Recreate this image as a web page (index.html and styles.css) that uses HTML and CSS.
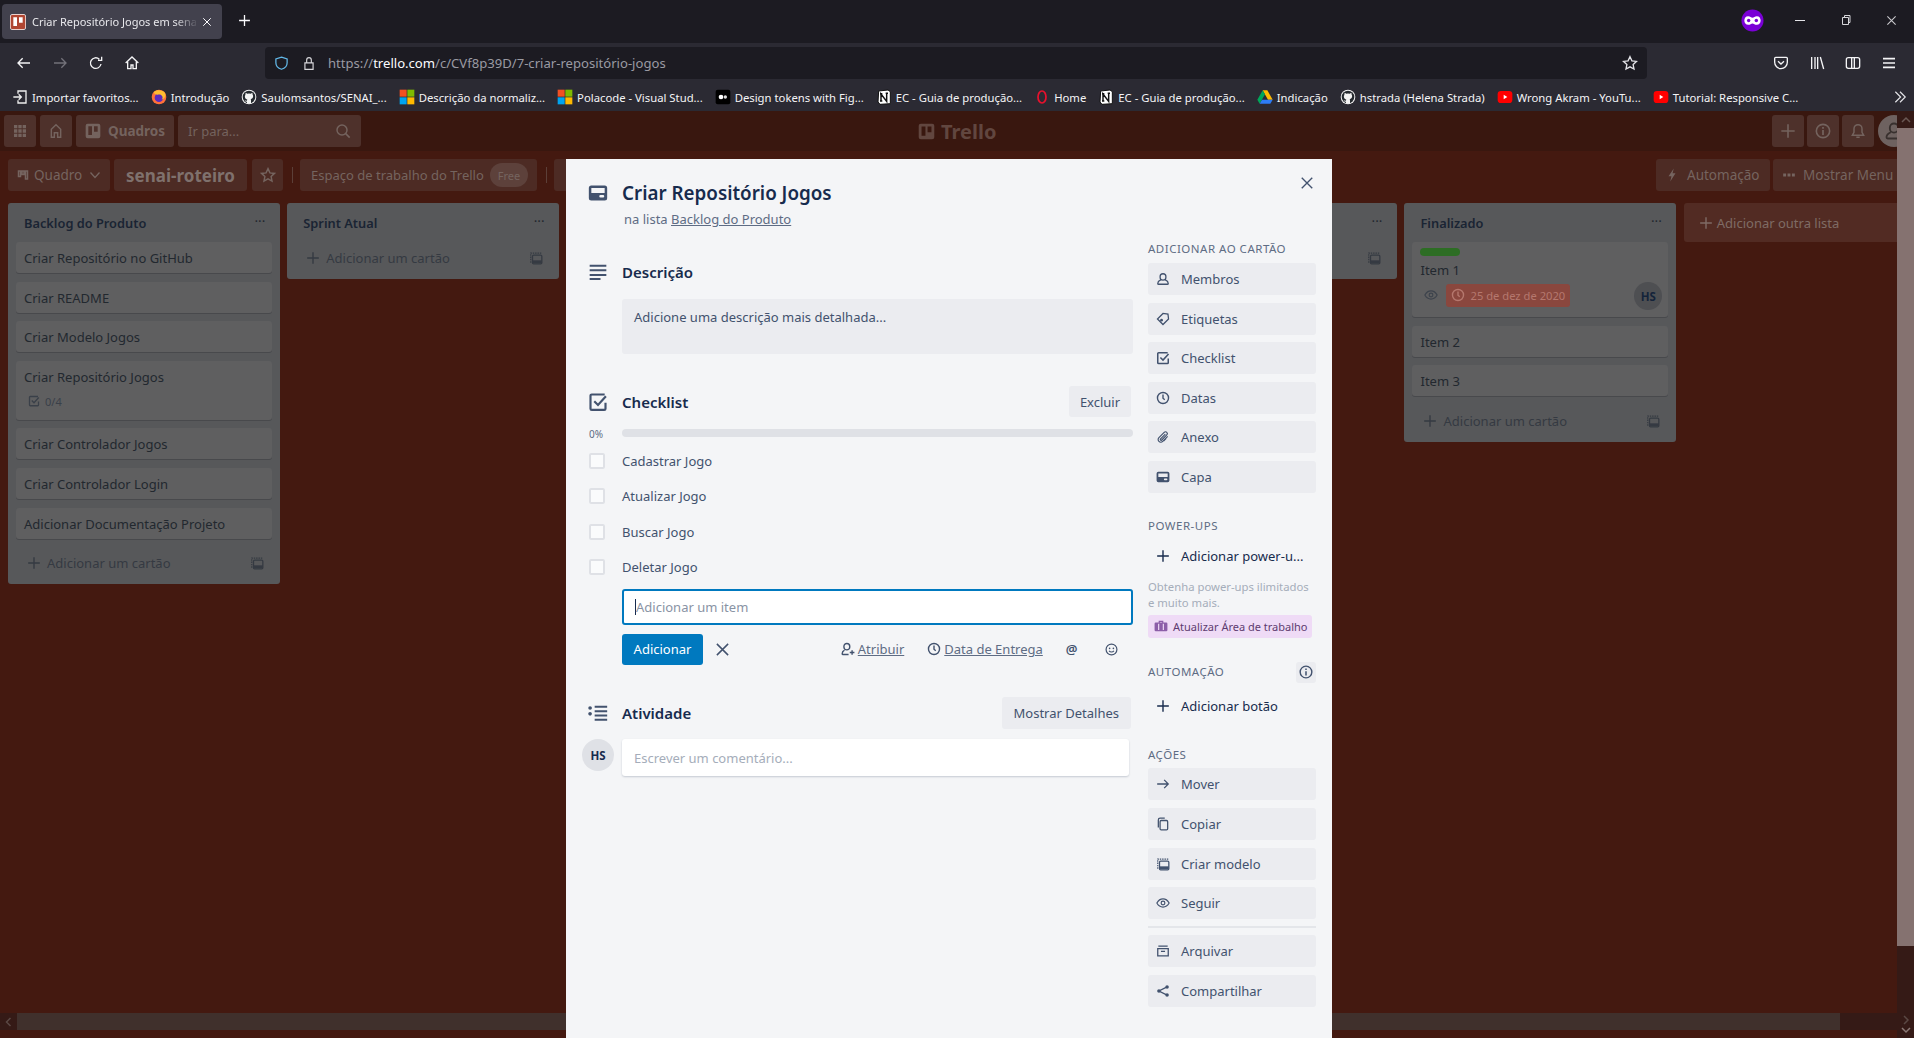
FILE: index.html
```html
<!DOCTYPE html>
<html lang="pt-BR">
<head>
    <meta charset="utf-8">
    <title>Criar Repositório Jogos em senai-roteiro | Trello</title>
    <link rel="stylesheet" href="styles.css">
</head>
<body>
    <svg class="sprite" xmlns="http://www.w3.org/2000/svg">
        <symbol id="i-card" viewBox="0 0 24 24"><path fill="currentColor" fill-rule="evenodd" d="M4 3h16a3 3 0 0 1 3 3v12a3 3 0 0 1-3 3H4a3 3 0 0 1-3-3V6a3 3 0 0 1 3-3zm0 3v6h16V6H4zm11 8.500a1.500 1.500 0 0 0 0 3h3a1.500 1.500 0 0 0 0-3h-3z"/></symbol>
        <symbol id="i-desc" viewBox="0 0 24 24"><path fill="none" stroke="currentColor" stroke-width="2.400" d="M2 4.500h20M2 10h20M2 15.500h20M2 20.500h13"/></symbol>
        <symbol id="i-check" viewBox="0 0 24 24"><path fill="none" stroke="currentColor" stroke-width="2.600" d="M21 13v7a1.500 1.500 0 0 1-1.500 1.500h-15A1.500 1.500 0 0 1 3 20V4.500A1.500 1.500 0 0 1 4.500 3H20M7.500 11l4.500 4.500L21.500 5"/></symbol>
        <symbol id="i-activity" viewBox="0 0 24 24"><circle cx="2.500" cy="6" r="2.200" fill="currentColor"/><circle cx="2.500" cy="13" r="2.200" fill="currentColor"/><path fill="none" stroke="currentColor" stroke-width="2.400" d="M8 4.500h15M8 10h15M8 15h15M8 20h15"/></symbol>
        <symbol id="i-member" viewBox="0 0 24 24"><path fill="none" stroke="currentColor" stroke-width="2.200" d="M12 3a5 5 0 0 1 5 5v1a5 5 0 0 1-10 0V8a5 5 0 0 1 5-5zM8 13.500C5 15 3 17 3 19.500c0 1 .6 1.500 1.500 1.500h15c.9 0 1.500-.5 1.500-1.500 0-2.500-2-4.500-5-6"/></symbol>
        <symbol id="i-tag" viewBox="0 0 24 24"><path fill="none" stroke="currentColor" stroke-width="2.200" d="M12 2.500l9.500 9.500L12 21.500 2.500 12 3.500 3.500z" transform="rotate(90 12 12)"/><circle cx="9.500" cy="14" r="2.400" fill="currentColor"/></symbol>
        <symbol id="i-clock" viewBox="0 0 24 24"><circle cx="12" cy="12" r="9.500" fill="none" stroke="currentColor" stroke-width="2.400"/><path fill="none" stroke="currentColor" stroke-width="2.400" d="M12 6v6.500l3 2.500"/></symbol>
        <symbol id="i-clip" viewBox="0 0 24 24"><path fill="none" stroke="currentColor" stroke-width="2" d="M20 11l-8.500 8.500a4.500 4.500 0 0 1-6.500-6.500L14 4a3 3 0 0 1 4.500 4.500L9.500 17.500a1.500 1.500 0 0 1-2-2L16 7M17.500 14.500l-4.500 4.500"/></symbol>
        <symbol id="i-plus" viewBox="0 0 24 24"><path fill="none" stroke="currentColor" stroke-width="2.400" d="M12 2v20M2 12h20"/></symbol>
        <symbol id="i-arrow" viewBox="0 0 24 24"><path fill="none" stroke="currentColor" stroke-width="2.200" d="M2 12h19M14 5l7 7-7 7"/></symbol>
        <symbol id="i-copy" viewBox="0 0 24 24"><path fill="none" stroke="currentColor" stroke-width="2.200" d="M9 6h9a2 2 0 0 1 2 2v12a2 2 0 0 1-2 2H9a2 2 0 0 1-2-2V8a2 2 0 0 1 2-2zM4 18V5a3 3 0 0 1 3-3h8"/></symbol>
        <symbol id="i-template" viewBox="0 0 24 24"><path fill="none" stroke="currentColor" stroke-width="2" stroke-dasharray="2.500 1.500" d="M3 20V3.500h18"/><rect x="6" y="7" width="16" height="15" rx="2" fill="none" stroke="currentColor" stroke-width="2.200"/><path fill="currentColor" d="M6 16h16v5H6z"/></symbol>
        <symbol id="i-eye" viewBox="0 0 24 24"><path fill="none" stroke="currentColor" stroke-width="2" d="M1.500 12C4 7.500 8 5 12 5s8 2.500 10.500 7C20 16.500 16 19 12 19s-8-2.500-10.500-7z"/><circle cx="12" cy="12" r="3.200" fill="none" stroke="currentColor" stroke-width="2"/></symbol>
        <symbol id="i-archive" viewBox="0 0 24 24"><path fill="none" stroke="currentColor" stroke-width="2.200" d="M4 3.500h16M3 8h18v12.500H3zM8.500 12.500h7"/></symbol>
        <symbol id="i-share" viewBox="0 0 24 24"><circle cx="5" cy="12" r="3" fill="currentColor"/><circle cx="19" cy="5" r="3" fill="currentColor"/><circle cx="19" cy="19" r="3" fill="currentColor"/><path fill="none" stroke="currentColor" stroke-width="2.200" d="M19 5L5 12l14 7"/></symbol>
        <symbol id="i-info" viewBox="0 0 24 24"><circle cx="12" cy="12" r="10" fill="none" stroke="currentColor" stroke-width="2.400"/><path fill="none" stroke="currentColor" stroke-width="2.600" d="M12 10.500V18M12 6v2.500"/></symbol>
        <symbol id="i-x" viewBox="0 0 24 24"><path fill="none" stroke="currentColor" stroke-width="2.400" d="M3 3l18 18M21 3L3 21"/></symbol>
        <symbol id="i-board" viewBox="0 0 24 24"><path fill="currentColor" fill-rule="evenodd" d="M4 1h16a3 3 0 0 1 3 3v16a3 3 0 0 1-3 3H4a3 3 0 0 1-3-3V4a3 3 0 0 1 3-3zm1 4v13h5.500V5H5zm8.500 0v8H19V5h-5.500z"/></symbol>
        <symbol id="i-github" viewBox="0 0 24 24"><circle cx="12" cy="12" r="11" fill="#f4f4f4"/><circle cx="12" cy="12" r="9.500" fill="#24292e"/><path fill="#f4f4f4" d="M7 5.500l2.500 1.500a8 8 0 0 1 5 0L17 5.500l.5 3c1 1.500 1 4-.5 5.500-.7.7-1.500 1-2.500 1.200.4.500.5 1 .5 2V22h-6v-3c-2 .3-3-.5-3.500-2 .8.500 2 1 3.500.5 0-.7.100-1.300.5-1.800-1-.2-1.800-.5-2.500-1.200-1.500-1.500-1.500-4-.5-5.500z"/></symbol>
        <symbol id="i-ms" viewBox="0 0 24 24"><path fill="#f25022" d="M1 1h10.500v10.500H1z"/><path fill="#7fba00" d="M12.500 1H23v10.500H12.500z"/><path fill="#00a4ef" d="M1 12.500h10.500V23H1z"/><path fill="#ffb900" d="M12.500 12.500H23V23H12.500z"/></symbol>
        <symbol id="i-notion" viewBox="0 0 24 24"><path fill="#fff" stroke="#111" stroke-width="1.500" d="M4 3l14-1.500L21.500 4v18L6 23l-3-3.500z"/><path fill="none" stroke="#111" stroke-width="2.200" d="M7.500 18V7.500l8.500 11V6.500M6 7h3.500M14.500 6.500H18M6 18h3.500"/></symbol>
        <symbol id="i-yt" viewBox="0 0 24 24"><rect x="1" y="3" width="22" height="18" rx="5" fill="#f00"/><path fill="#fff" d="M10 8.500l5.500 3.500-5.500 3.500z"/></symbol>
    </svg>

    <div class="browser">
        <div class="tabstrip">
            <div class="tab">
                <svg class="favicon"><use href="#i-board"/></svg>
                <span class="tab-title">Criar Repositório Jogos em sena</span>
                <svg class="tab-close"><use href="#i-x"/></svg>
            </div>
            <svg class="new-tab"><use href="#i-plus"/></svg>
            <div class="win-controls">
                <svg class="mask" viewBox="0 0 24 24"><circle cx="12" cy="12" r="11.500" fill="#7a00d6"/><path fill="#fff" d="M7.500 7.500c2 0 3.200 1.500 4.500 1.500s2.500-1.500 4.500-1.500c2.800 0 4 2 4 4.500s-1.500 4.500-4 4.500c-2 0-3.200-1.500-4.500-1.500s-2.500 1.500-4.500 1.500c-2.500 0-4-2-4-4.500s1.200-4.500 4-4.500z"/><circle cx="8" cy="12" r="1.800" fill="#7a00d6"/><circle cx="16" cy="12" r="1.800" fill="#7a00d6"/></svg>
                <span class="win-min"></span>
                <svg class="win-restore" viewBox="0 0 12 12"><path fill="none" stroke="#d6d6da" d="M2.500 3.500h6v7h-6zM4.500 3.500v-2h5.500v7H8.500"/></svg>
                <svg class="win-close"><use href="#i-x"/></svg>
            </div>
        </div>

        <div class="navbar">
            <svg class="nav-ic" viewBox="0 0 24 24"><path fill="none" stroke="currentColor" stroke-width="2" d="M21 12H3M10 5l-7 7 7 7"/></svg>
            <svg class="nav-ic off" viewBox="0 0 24 24"><path fill="none" stroke="currentColor" stroke-width="2" d="M3 12h18M14 5l7 7-7 7"/></svg>
            <svg class="nav-ic" viewBox="0 0 24 24"><path fill="none" stroke="currentColor" stroke-width="2" d="M19.500 13.500A8 8 0 1 1 17 6.200M20.500 2.500V8H15"/></svg>
            <svg class="nav-ic home" viewBox="0 0 24 24"><path fill="none" stroke="currentColor" stroke-width="2" d="M2.500 12L12 3l9.500 9M5.500 10v10.500h5V15h3v5.500h5V10"/></svg>
            <div class="urlbar">
                <svg class="shield" viewBox="0 0 24 24"><path fill="none" stroke="#62b8e8" stroke-width="2" d="M12 2.500l9 3v6c0 5-4 9-9 10.500-5-1.500-9-5.500-9-10.500v-6z"/></svg>
                <svg class="lock" viewBox="0 0 24 24"><path fill="none" stroke="#d6d6da" stroke-width="2" d="M5 11h14v11H5zM8 11V6a4 4 0 0 1 8 0v5"/></svg>
                <span class="url">https://<b>trello.com</b>/c/CVf8p39D/7-criar-repositório-jogos</span>
                <svg class="url-star" viewBox="0 0 24 24"><path fill="none" stroke="#e4e4e8" stroke-width="2" d="M12 2.500l2.900 6.300 6.800.8-5 4.700 1.300 6.800-6-3.400-6 3.400 1.300-6.800-5-4.700 6.800-.8z"/></svg>
            </div>
            <div class="nav-right">
                <svg class="nav-ic" viewBox="0 0 24 24"><path fill="none" stroke="currentColor" stroke-width="2" d="M4 3.500h16a1.500 1.500 0 0 1 1.500 1.500v6a9.500 9.500 0 0 1-19 0V5A1.500 1.500 0 0 1 4 3.500zM7.500 9.500l4.500 4 4.500-4"/></svg>
                <svg class="nav-ic" viewBox="0 0 24 24"><path fill="none" stroke="currentColor" stroke-width="2" d="M4 3v18M9 3v18M13 3v18M17 3l5 18"/></svg>
                <svg class="nav-ic" viewBox="0 0 24 24"><path fill="none" stroke="currentColor" stroke-width="2" d="M5 4h14a3 3 0 0 1 3 3v10a3 3 0 0 1-3 3H5a3 3 0 0 1-3-3V7a3 3 0 0 1 3-3zM10 4v16M14 4v16"/></svg>
                <svg class="nav-ic" viewBox="0 0 24 24"><path fill="none" stroke="currentColor" stroke-width="2.400" d="M3 5.500h18M3 12h18M3 18.500h18"/></svg>
            </div>
        </div>

        <div class="bookmarks">
            <div class="bm"><svg class="bm-ic" viewBox="0 0 24 24"><path fill="none" stroke="#eee" stroke-width="2" d="M9 7V3h12v18H9v-4M2 12h12M10 8l4 4-4 4"/></svg><span>Importar favoritos...</span></div>
            <div class="bm"><svg class="bm-ic" viewBox="0 0 24 24"><circle cx="12" cy="12" r="11" fill="#ff7139"/><circle cx="12" cy="13" r="6.500" fill="#5b2bbd"/><path fill="#ffbd30" d="M4 5c3 6 8 2 11 4s3 5 1 7c4-1 7-5 5-10-3-4-12-6-17-1z"/></svg><span>Introdução</span></div>
            <div class="bm"><svg class="bm-ic"><use href="#i-github"/></svg><span>Saulomsantos/SENAI_...</span></div>
            <div class="bm"><svg class="bm-ic"><use href="#i-ms"/></svg><span>Descrição da normaliz...</span></div>
            <div class="bm"><svg class="bm-ic"><use href="#i-ms"/></svg><span>Polacode - Visual Stud...</span></div>
            <div class="bm"><svg class="bm-ic" viewBox="0 0 24 24"><rect x="1" y="1" width="22" height="22" rx="3" fill="#000"/><circle cx="9" cy="12" r="3.500" fill="#fff"/><circle cx="15.500" cy="12" r="2.500" fill="#ddd"/></svg><span>Design tokens with Fig...</span></div>
            <div class="bm"><svg class="bm-ic"><use href="#i-notion"/></svg><span>EC - Guia de produção...</span></div>
            <div class="bm"><svg class="bm-ic" viewBox="0 0 24 24"><ellipse cx="12" cy="12" rx="6" ry="9" fill="none" stroke="#e8112d" stroke-width="2.600"/></svg><span>Home</span></div>
            <div class="bm"><svg class="bm-ic"><use href="#i-notion"/></svg><span>EC - Guia de produção...</span></div>
            <div class="bm"><svg class="bm-ic" viewBox="0 0 24 24"><path fill="#ffba00" d="M8.500 2h7l8 14h-7z"/><path fill="#00a65a" d="M8.500 2L.5 16l3.500 6 8-14z"/><path fill="#2d7cf6" d="M7.500 16H23.500l-3.500 6H4z"/></svg><span>Indicação</span></div>
            <div class="bm"><svg class="bm-ic"><use href="#i-github"/></svg><span>hstrada (Helena Strada)</span></div>
            <div class="bm"><svg class="bm-ic"><use href="#i-yt"/></svg><span>Wrong Akram - YouTu...</span></div>
            <div class="bm"><svg class="bm-ic"><use href="#i-yt"/></svg><span>Tutorial: Responsive C...</span></div>
            <svg class="bm-more" viewBox="0 0 24 24"><path fill="none" stroke="#e4e4e8" stroke-width="2" d="M4 3l9 9-9 9M12 3l9 9-9 9"/></svg>
        </div>
    </div>

    <div class="page">
        <header class="topbar">
            <div class="top-btn square">
                <svg class="ic16" viewBox="0 0 24 24"><path fill="currentColor" d="M3 3h5v5H3zM9.500 3h5v5h-5zM16 3h5v5h-5zM3 9.500h5v5H3zM9.500 9.500h5v5h-5zM16 9.500h5v5h-5zM3 16h5v5H3zM9.500 16h5v5h-5zM16 16h5v5h-5z"/></svg>
            </div>
            <div class="top-btn square">
                <svg class="ic16" viewBox="0 0 24 24"><path fill="none" stroke="currentColor" stroke-width="2.200" d="M12 2.500L5 9.500v12h4.500v-7h5v7H19v-12z"/></svg>
            </div>
            <div class="top-btn quadros">
                <svg class="ic16"><use href="#i-board"/></svg>
                <span>Quadros</span>
            </div>
            <div class="top-btn search">
                <span>Ir para...</span>
                <svg class="ic16" viewBox="0 0 24 24"><circle cx="10.500" cy="10.500" r="7.500" fill="none" stroke="currentColor" stroke-width="2.200"/><path fill="none" stroke="currentColor" stroke-width="2.400" d="M16 16l6 6"/></svg>
            </div>
            <div class="logo">
                <svg class="logo-ic"><use href="#i-board"/></svg>
                <span>Trello</span>
            </div>
            <div class="top-right">
                <div class="top-btn square"><svg class="ic16"><use href="#i-plus"/></svg></div>
                <div class="top-btn square"><svg class="ic16"><use href="#i-info"/></svg></div>
                <div class="top-btn square"><svg class="ic16" viewBox="0 0 24 24"><path fill="none" stroke="currentColor" stroke-width="2.200" d="M12 2.500a6 6 0 0 1 6 6V14l2.500 4.500h-17L6 14V8.500a6 6 0 0 1 6-6zM9.500 21.500h5"/></svg></div>
                <div class="top-avatar"><svg class="ic20"><use href="#i-member"/></svg></div>
            </div>
        </header>

        <div class="board-head">
            <div class="bh-btn quadro">
                <svg class="ic12" viewBox="0 0 24 24"><path fill="none" stroke="currentColor" stroke-width="3" d="M3 4v11h4V4zM10 4v7h4V4zM17 4v16h4V4z"/></svg>
                <span>Quadro</span>
                <svg class="ic12 chev" viewBox="0 0 24 24"><path fill="none" stroke="currentColor" stroke-width="2.600" d="M3 7l9 10 9-10"/></svg>
            </div>
            <div class="bh-btn board-name">senai-roteiro</div>
            <div class="bh-btn star">
                <svg class="ic16" viewBox="0 0 24 24"><path fill="none" stroke="currentColor" stroke-width="2.200" d="M12 2.500l2.900 6.300 6.800.8-5 4.700 1.300 6.800-6-3.400-6 3.400 1.300-6.800-5-4.700 6.800-.8z"/></svg>
            </div>
            <span class="bh-sep"></span>
            <div class="bh-btn workspace">
                <span>Espaço de trabalho do Trello</span>
                <span class="free">Free</span>
            </div>
            <span class="bh-sep"></span>
            <div class="bh-btn hidden-btn"></div>
            <div class="bh-right">
                <div class="bh-btn auto-btn">
                    <svg class="ic14" viewBox="0 0 24 24"><path fill="currentColor" d="M15 1L6 14h5l-2 9 9-14h-5z"/></svg>
                    <span>Automação</span>
                </div>
                <div class="bh-btn menu-btn">
                    <svg class="ic14" viewBox="0 0 24 24"><path fill="currentColor" d="M2 9.500h5v5H2zM9.500 9.500h5v5h-5zM17 9.500h5v5h-5z"/></svg>
                    <span>Mostrar Menu</span>
                </div>
            </div>
        </div>

        <div class="lists">
            <section class="list">
                <div class="list-head"><h2>Backlog do Produto</h2><span class="dots">•••</span></div>
                <div class="card">Criar Repositório no GitHub</div>
                <div class="card">Criar README</div>
                <div class="card">Criar Modelo Jogos</div>
                <div class="card tall">
                    Criar Repositório Jogos
                    <div class="badge-row"><svg class="ic12"><use href="#i-check"/></svg><span>0/4</span></div>
                </div>
                <div class="card">Criar Controlador Jogos</div>
                <div class="card">Criar Controlador Login</div>
                <div class="card">Adicionar Documentação Projeto</div>
                <div class="add-card"><svg class="ic14"><use href="#i-plus"/></svg><span>Adicionar um cartão</span><svg class="ic14 tpl"><use href="#i-template"/></svg></div>
            </section>
            <section class="list">
                <div class="list-head"><h2>Sprint Atual</h2><span class="dots">•••</span></div>
                <div class="add-card"><svg class="ic14"><use href="#i-plus"/></svg><span>Adicionar um cartão</span><svg class="ic14 tpl"><use href="#i-template"/></svg></div>
            </section>
            <section class="list">
                <div class="list-head"><h2></h2><span class="dots">•••</span></div>
                <div class="add-card"><svg class="ic14 tpl"><use href="#i-template"/></svg></div>
            </section>
            <section class="list">
                <div class="list-head"><h2></h2><span class="dots">•••</span></div>
                <div class="add-card"><svg class="ic14 tpl"><use href="#i-template"/></svg></div>
            </section>
            <section class="list">
                <div class="list-head"><h2></h2><span class="dots">•••</span></div>
                <div class="add-card"><svg class="ic14 tpl"><use href="#i-template"/></svg></div>
            </section>
            <section class="list">
                <div class="list-head"><h2>Finalizado</h2><span class="dots">•••</span></div>
                <div class="card item-one">
                    <span class="label-green"></span>
                    <div class="item-title">Item 1</div>
                    <div class="item-meta">
                        <svg class="ic14 eye"><use href="#i-eye"/></svg>
                        <span class="due"><svg class="ic14"><use href="#i-clock"/></svg>25 de dez de 2020</span>
                        <span class="card-avatar">HS</span>
                    </div>
                </div>
                <div class="card">Item 2</div>
                <div class="card">Item 3</div>
                <div class="add-card"><svg class="ic14"><use href="#i-plus"/></svg><span>Adicionar um cartão</span><svg class="ic14 tpl"><use href="#i-template"/></svg></div>
            </section>
            <div class="add-list"><svg class="ic14"><use href="#i-plus"/></svg><span>Adicionar outra lista</span></div>
        </div>

        <div class="scroll-v">
            <svg class="arrow-up" viewBox="0 0 12 12"><path fill="none" stroke="#6a5854" stroke-width="1.500" d="M2 8l4-4 4 4"/></svg>
            <span class="thumb-v"></span>
            <svg class="arrow-right" viewBox="0 0 12 12"><path fill="none" stroke="#5a4844" stroke-width="1.500" d="M4 2l4 4-4 4"/></svg>
            <svg class="arrow-down" viewBox="0 0 12 12"><path fill="none" stroke="#8a7874" stroke-width="1.500" d="M2 4l4 4 4-4"/></svg>
        </div>
        <div class="scroll-h">
            <svg class="arrow-left" viewBox="0 0 12 12"><path fill="none" stroke="#5a4844" stroke-width="1.500" d="M8 2L4 6l4 4"/></svg>
            <span class="thumb-h"></span>
        </div>

        <div class="modal">
            <svg class="modal-close"><use href="#i-x"/></svg>
            <div class="modal-title">
                <svg class="sec-ic"><use href="#i-card"/></svg>
                <h1>Criar Repositório Jogos</h1>
            </div>
            <p class="in-list">na lista <a>Backlog do Produto</a></p>

            <div class="modal-body">
                <main class="main-col">
                    <div class="sec-head first">
                        <svg class="sec-ic"><use href="#i-desc"/></svg>
                        <h3>Descrição</h3>
                    </div>
                    <div class="desc-box">Adicione uma descrição mais detalhada...</div>

                    <div class="sec-head checklist-head">
                        <svg class="sec-ic"><use href="#i-check"/></svg>
                        <h3>Checklist</h3>
                        <button class="btn-gray">Excluir</button>
                    </div>
                    <div class="progress"><span class="pct">0%</span><span class="bar"></span></div>
                    <div class="check-items">
                        <div class="check-item"><span class="box"></span>Cadastrar Jogo</div>
                        <div class="check-item"><span class="box"></span>Atualizar Jogo</div>
                        <div class="check-item"><span class="box"></span>Buscar Jogo</div>
                        <div class="check-item"><span class="box"></span>Deletar Jogo</div>
                    </div>
                    <div class="item-input"><span class="caret"></span>Adicionar um item</div>
                    <div class="item-actions">
                        <button class="btn-blue">Adicionar</button>
                        <svg class="cancel"><use href="#i-x"/></svg>
                        <a class="act first-act"><svg class="ic14" viewBox="0 0 24 24"><path fill="none" stroke="currentColor" stroke-width="2.400" d="M10 2.500a5 5 0 0 1 5 5v1a5 5 0 0 1-10 0v-1a5 5 0 0 1 5-5zM6 14c-2.500 1.200-4 3-4 6 0 .8.500 1.500 1.500 1.500H13M19 14v8M15 18h8"/></svg><u>Atribuir</u></a>
                        <a class="act"><svg class="ic14"><use href="#i-clock"/></svg><u>Data de Entrega</u></a>
                        <span class="at">@</span>
                        <svg class="smile" viewBox="0 0 24 24"><circle cx="12" cy="12" r="10" fill="none" stroke="currentColor" stroke-width="2.200"/><circle cx="8.500" cy="10" r="1.500" fill="currentColor"/><circle cx="15.500" cy="10" r="1.500" fill="currentColor"/><path fill="none" stroke="currentColor" stroke-width="2" d="M7.500 14.500c2.500 3 6.500 3 9 0"/></svg>
                    </div>

                    <div class="sec-head activity-head">
                        <svg class="sec-ic"><use href="#i-activity"/></svg>
                        <h3>Atividade</h3>
                        <button class="btn-gray">Mostrar Detalhes</button>
                    </div>
                    <div class="comment-row">
                        <span class="avatar">HS</span>
                        <div class="comment">Escrever um comentário...</div>
                    </div>
                </main>

                <aside class="side">
                    <h4 class="side-first">ADICIONAR AO CARTÃO</h4>
                    <div class="side-btn"><svg class="ic14"><use href="#i-member"/></svg>Membros</div>
                    <div class="side-btn"><svg class="ic14"><use href="#i-tag"/></svg>Etiquetas</div>
                    <div class="side-btn"><svg class="ic14"><use href="#i-check"/></svg>Checklist</div>
                    <div class="side-btn"><svg class="ic14"><use href="#i-clock"/></svg>Datas</div>
                    <div class="side-btn"><svg class="ic14"><use href="#i-clip"/></svg>Anexo</div>
                    <div class="side-btn"><svg class="ic14"><use href="#i-card"/></svg>Capa</div>

                    <h4 class="powerups">POWER-UPS</h4>
                    <div class="side-btn flat"><svg class="ic14"><use href="#i-plus"/></svg>Adicionar power-u...</div>
                    <p class="upsell">Obtenha power-ups ilimitados<br>e muito mais.</p>
                    <div class="upgrade">
                        <svg class="ic14" viewBox="0 0 24 24"><path fill="currentColor" fill-rule="evenodd" d="M8 3h8v3h5a2 2 0 0 1 2 2v11a2 2 0 0 1-2 2H3a2 2 0 0 1-2-2V8a2 2 0 0 1 2-2h5zm2 2v1h4V5zM7 8v11h2V8zm8 0v11h2V8z"/></svg>
                        <span>Atualizar Área de trabalho</span>
                    </div>

                    <div class="auto-head">
                        <h4>AUTOMAÇÃO</h4>
                        <span class="info-btn"><svg class="ic14"><use href="#i-info"/></svg></span>
                    </div>
                    <div class="side-btn flat auto-add"><svg class="ic14"><use href="#i-plus"/></svg>Adicionar botão</div>

                    <h4 class="acoes">AÇÕES</h4>
                    <div class="side-btn"><svg class="ic14"><use href="#i-arrow"/></svg>Mover</div>
                    <div class="side-btn"><svg class="ic14"><use href="#i-copy"/></svg>Copiar</div>
                    <div class="side-btn"><svg class="ic14"><use href="#i-template"/></svg>Criar modelo</div>
                    <div class="side-btn last"><svg class="ic14"><use href="#i-eye"/></svg>Seguir</div>
                    <hr class="side-sep">
                    <div class="side-btn"><svg class="ic14"><use href="#i-archive"/></svg>Arquivar</div>
                    <div class="side-btn"><svg class="ic14"><use href="#i-share"/></svg>Compartilhar</div>
                </aside>
            </div>
        </div>
    </div>
</body>
</html>
```

FILE: styles.css
```css
* {
    box-sizing: border-box;
}

html, body {
    height: 100%;
}

body {
    margin: 0;
    display: flex;
    flex-direction: column;
    overflow: hidden;
    font-family: "Noto Sans", "Open Sans", sans-serif;
    font-size: 13px;
    background: #441910;
}

.sprite {
    display: none;
}

/* icon sizes */
.ic12 { width: 12px; height: 12px; flex: none; }
.ic14 { width: 14px; height: 14px; flex: none; }
.ic16 { width: 16px; height: 16px; flex: none; }
.ic20 { width: 20px; height: 20px; flex: none; }

/* browser chrome */
.browser {
    flex: none;
    height: 111px;
    background: #2b2a33;
    color: #fbfbfe;
}

.tabstrip {
    height: 43px;
    display: flex;
    align-items: center;
    background: #1c1b22;
    padding: 0 0 3px 2px;
}

.tab {
    width: 220px;
    height: 35px;
    margin-top: 3px;
    display: flex;
    align-items: center;
    padding: 0 10px 0 8px;
    border-radius: 4px;
    background: #42414d;
}

.favicon {
    width: 16px;
    height: 16px;
    flex: none;
    background: #fff;
    border-radius: 3px;
    color: #b04632;
}

.tab-title {
    flex: 1;
    margin-left: 6px;
    white-space: nowrap;
    font-size: 11px;
    color: #e8e8ec;
    -webkit-mask-image: linear-gradient(to right, #000 85%, transparent);
    mask-image: linear-gradient(to right, #000 85%, transparent);
}

.tab-close {
    width: 10px;
    height: 10px;
    margin-left: 3px;
    flex: none;
}

.new-tab {
    width: 13px;
    height: 13px;
    margin-left: 16px;
    color: #fbfbfe;
}

.win-controls {
    margin-left: auto;
    display: flex;
    align-items: center;
    color: #d6d6da;
}

.mask {
    width: 23px;
    height: 23px;
    margin-right: 31px;
}

.win-min {
    width: 10px;
    height: 1px;
    background: #e4e4e8;
    margin-right: 35px;
}

.win-restore {
    width: 12px;
    height: 12px;
    margin-right: 34px;
}

.win-close {
    width: 11px;
    height: 11px;
    margin-right: 17px;
    color: #c8c8cc;
}

.navbar {
    height: 40px;
    display: flex;
    align-items: center;
    padding-left: 16px;
}

.nav-ic {
    width: 16px;
    height: 16px;
    flex: none;
    margin-right: 20px;
    color: #f4f4f6;
}

.nav-ic.off {
    color: #73727a;
}

.nav-ic.home {
    margin-right: 0;
}

.urlbar {
    width: 1382px;
    height: 32px;
    margin-left: 125px;
    flex: none;
    display: flex;
    align-items: center;
    padding-left: 9px;
    border-radius: 4px;
    background: #1c1b22;
}

.shield {
    width: 15px;
    height: 16px;
}

.lock {
    width: 14px;
    height: 15px;
    margin-left: 13px;
}

.url {
    margin-left: 12px;
    font-size: 13.100px;
    color: #9a9aa2;
}

.url b {
    font-weight: 400;
    color: #fbfbfe;
}

.url-star {
    width: 16px;
    height: 16px;
    margin-left: auto;
    margin-right: 9px;
}

.nav-right {
    display: flex;
    align-items: center;
    margin-left: 126px;
}

.bookmarks {
    height: 28px;
    display: flex;
    align-items: center;
    padding-left: 12px;
    font-size: 11.300px;
    color: #f4f4f6;
}

.bm {
    display: flex;
    align-items: center;
    gap: 4px;
    margin-right: 12px;
    white-space: nowrap;
}

.bm-ic {
    width: 16px;
    height: 16px;
    flex: none;
}

.bm-more {
    width: 14px;
    height: 14px;
    margin-left: auto;
    margin-right: 7px;
}

/* trello page, dimmed behind the modal */
.page {
    position: relative;
    flex: 1;
    min-height: 0;
    overflow: hidden;
    display: flex;
    flex-direction: column;
}

.topbar {
    flex: none;
    height: 40px;
    display: flex;
    align-items: center;
    gap: 4px;
    padding: 0 4px;
    background: #39170f;
    color: #74635e;
    position: relative;
}

.top-btn {
    height: 32px;
    display: flex;
    align-items: center;
    justify-content: center;
    border-radius: 3px;
    background: #4e312b;
}

.top-btn.square {
    width: 32px;
}

.quadros {
    width: 98px;
    gap: 7px;
    font-weight: 700;
    font-size: 13.500px;
}

.search {
    width: 183px;
    justify-content: space-between;
    padding: 0 10px;
    font-size: 13px;
}

.logo {
    position: absolute;
    left: 918px;
    top: 0;
    height: 40px;
    display: flex;
    align-items: center;
    gap: 6px;
    font-size: 20px;
    font-weight: 700;
    color: #61463f;
}

.logo-ic {
    width: 17px;
    height: 17px;
}

.top-right {
    margin-left: auto;
    display: flex;
    align-items: center;
    gap: 3px;
}

.top-avatar {
    width: 32px;
    height: 32px;
    margin-left: 1px;
    border-radius: 50%;
    display: flex;
    align-items: center;
    justify-content: center;
    background: #6e6260;
    color: #38302e;
}

.board-head {
    flex: none;
    height: 52px;
    display: flex;
    align-items: center;
    padding: 8px 9px 12px 8px;
    gap: 4px;
    color: #75645f;
}

.bh-btn {
    height: 32px;
    display: flex;
    align-items: center;
    gap: 5px;
    padding: 0 9px;
    border-radius: 3px;
    background: #4d2b24;
    font-size: 13px;
    white-space: nowrap;
}

.quadro {
    width: 102px;
    font-size: 13.500px;
}

.chev {
    margin-left: auto;
}

.board-name {
    width: 133px;
    justify-content: center;
    font-size: 17px;
    font-weight: 700;
    color: #7f716d;
}

.star {
    width: 31px;
    margin-left: 1px;
    justify-content: center;
    padding: 0;
}

.bh-sep {
    width: 1px;
    height: 16px;
    margin: 0 3px 0 5px;
    background: #5c3f38;
}

.workspace {
    width: 237px;
    padding-left: 11px;
    gap: 6px;
}

.free {
    height: 24px;
    padding: 0 8px;
    display: flex;
    align-items: center;
    border-radius: 12px;
    background: #5d413b;
    font-size: 11px;
}

.hidden-btn {
    width: 60px;
}

.bh-right {
    margin-left: auto;
    display: flex;
    gap: 3px;
}

.auto-btn {
    width: 114px;
    gap: 8px;
    font-size: 13.500px;
}

.menu-btn {
    width: 132px;
    gap: 7px;
    font-size: 13.500px;
}

.lists {
    flex: 1;
    min-height: 0;
    display: flex;
    align-items: flex-start;
    gap: 7.500px;
    padding-left: 8px;
}

.list {
    flex: none;
    width: 271.800px;
    padding: 0 8px 5px;
    border-radius: 3px;
    background: #57585a;
}

.list-head {
    height: 39px;
    display: flex;
    align-items: center;
    justify-content: space-between;
    padding: 0 6px 0 8px;
}

.list-head h2 {
    margin: 0;
    font-size: 12.800px;
    font-weight: 600;
    color: #1a2433;
}

.dots {
    font-size: 7px;
    letter-spacing: 1px;
    color: #22272e;
    margin-top: -3px;
}

.card {
    min-height: 31px;
    margin-bottom: 8.600px;
    padding: 7px 8px 5px;
    border-radius: 3px;
    background: #5f5f60;
    box-shadow: 0 1px 0 #48494c;
    font-size: 13px;
    line-height: 19px;
    color: #22282f;
}

.card.tall {
    height: 59px;
}

.badge-row {
    display: flex;
    align-items: center;
    gap: 5px;
    margin-top: 5px;
    padding-left: 4px;
    font-size: 11px;
    color: #3a4049;
}

.add-card {
    height: 32px;
    display: flex;
    align-items: center;
    padding: 0 8px 0 11px;
    gap: 6px;
    color: #353a42;
    font-size: 13px;
}

.tpl {
    margin-left: auto;
}

.item-one {
    height: 75px;
    padding-top: 6px;
}

.label-green {
    display: block;
    width: 40px;
    height: 8px;
    border-radius: 4px;
    background: #2d6d24;
}

.item-title {
    margin-top: 5px;
}

.item-meta {
    display: flex;
    align-items: center;
    position: relative;
}

.eye {
    margin-left: 4px;
    color: #3d434c;
}

.due {
    height: 23px;
    margin-left: 8px;
    display: flex;
    align-items: center;
    gap: 5px;
    padding: 0 5px;
    border-radius: 3px;
    background: #8a473e;
    color: #b5786e;
    font-size: 11.200px;
}

.card-avatar {
    width: 28px;
    height: 28px;
    margin-left: auto;
    margin-right: -2px;
    margin-top: 2px;
    border-radius: 50%;
    display: flex;
    align-items: center;
    justify-content: center;
    background: #4e4f52;
    color: #14233a;
    font-size: 11.500px;
    font-weight: 700;
}

.add-list {
    flex: none;
    width: 272px;
    height: 39px;
    display: flex;
    align-items: center;
    gap: 4px;
    padding-left: 15px;
    border-radius: 3px;
    background: #522b23;
    color: #7f6b65;
    font-size: 13px;
}

/* scrollbars of the board */
.scroll-v {
    position: absolute;
    top: 0;
    right: 0;
    bottom: 0;
    width: 17px;
    display: flex;
    flex-direction: column;
    align-items: center;
    background: #351a16;
}

.arrow-up,
.arrow-right,
.arrow-down,
.arrow-left {
    width: 12px;
    height: 12px;
    flex: none;
}

.arrow-up {
    margin-top: 3px;
}

.thumb-v {
    display: block;
    width: 100%;
    height: 818px;
    margin-top: 2px;
    background: #857270;
}

.arrow-right {
    margin-top: auto;
    margin-bottom: -2px;
}

.arrow-down {
    margin-bottom: 2px;
}

.scroll-h {
    position: absolute;
    left: 0;
    right: 17px;
    top: 902px;
    height: 17px;
    display: flex;
    align-items: center;
    background: #351a16;
}

.arrow-left {
    width: 17px;
}

.thumb-h {
    width: 1823px;
    height: 17px;
    background: #40302c;
}

/* card modal */
.modal {
    position: absolute;
    left: 566px;
    top: 48px;
    bottom: 0;
    width: 766px;
    padding: 20px 16px 0 23px;
    background: #f4f5f7;
    color: #172b4d;
    overflow: hidden;
}

.modal-close {
    position: absolute;
    top: 17px;
    right: 18px;
    width: 14px;
    height: 14px;
    color: #42526e;
}

.modal-title {
    height: 28px;
    display: flex;
    align-items: center;
}

.sec-ic {
    width: 20px;
    height: 20px;
    flex: none;
    margin-left: -1px;
    margin-right: 14px;
    color: #42526e;
}

.modal-title h1 {
    margin: 0;
    font-size: 18.800px;
    font-weight: 600;
}

.in-list {
    margin: 2px 0 0 35px;
    line-height: 20px;
    font-size: 13px;
    color: #5e6c84;
}

.in-list a {
    text-decoration: underline;
}

.modal-body {
    display: flex;
    gap: 15px;
}

.main-col {
    width: 544px;
    flex: none;
}

.sec-head {
    display: flex;
    align-items: center;
}

.sec-head h3 {
    margin: 0;
    font-size: 15px;
    font-weight: 600;
}

.sec-head.first {
    height: 24px;
    margin-top: 31px;
}

.desc-box {
    height: 55px;
    margin: 15px 0 0 33px;
    padding: 8px 12px;
    border-radius: 3px;
    background: #ebecf0;
    font-size: 13px;
    line-height: 20px;
    color: #42526e;
}

.checklist-head {
    height: 31px;
    margin-top: 32px;
}

.btn-gray {
    height: 100%;
    margin-left: auto;
    margin-right: 2px;
    padding: 0 12px;
    border: none;
    border-radius: 3px;
    background: #ebecf0;
    font-family: inherit;
    font-size: 13px;
    color: #42526e;
}

.checklist-head .btn-gray {
    width: 62px;
    padding: 0;
}

.progress {
    height: 8px;
    margin-top: 12px;
    display: flex;
    align-items: center;
}

.pct {
    width: 33px;
    margin-top: 2px;
    font-size: 10px;
    color: #5e6c84;
}

.bar {
    flex: 1;
    height: 8px;
    border-radius: 4px;
    background: #dfe1e6;
}

.check-items {
    margin-top: 6px;
}

.check-item {
    height: 35.500px;
    display: flex;
    align-items: center;
    font-size: 13px;
    color: #42526e;
}

.box {
    width: 16px;
    height: 16px;
    margin-right: 17px;
    border-radius: 2px;
    background: #fafbfc;
    box-shadow: inset 0 0 0 2px #dfe1e6;
}

.item-input {
    height: 36px;
    margin: 4px 0 0 33px;
    display: flex;
    align-items: center;
    padding-left: 11px;
    border: 2px solid #0079bf;
    border-radius: 3px;
    background: #fff;
    font-size: 13px;
    color: #8993a4;
}

.caret {
    width: 1px;
    height: 16px;
    background: #172b4d;
}

.item-actions {
    height: 31px;
    margin: 8.500px 0 0 33px;
    display: flex;
    align-items: center;
    color: #42526e;
}

.btn-blue {
    width: 81px;
    height: 31px;
    border: none;
    border-radius: 3px;
    background: #0079bf;
    color: #fff;
    font-family: inherit;
    font-size: 13px;
}

.cancel {
    width: 15px;
    height: 15px;
    margin-left: 12px;
}

.act {
    display: flex;
    align-items: center;
    gap: 3px;
    margin-left: 23px;
    font-size: 13px;
    color: #5e6c84;
}

.act svg {
    color: #42526e;
}

.first-act {
    margin-left: auto;
}

.at {
    margin-left: 23px;
    font-size: 13px;
    font-weight: 600;
}

.smile {
    width: 13px;
    height: 13px;
    margin-left: 27.500px;
    margin-right: 15px;
}

.activity-head {
    height: 32px;
    margin-top: 32.500px;
}

.comment-row {
    position: relative;
    margin: 10px 0 0 33px;
}

.avatar {
    position: absolute;
    left: -40px;
    top: 0;
    width: 32px;
    height: 32px;
    border-radius: 50%;
    display: flex;
    align-items: center;
    justify-content: center;
    background: #dfe1e6;
    font-size: 11.500px;
    font-weight: 700;
}

.comment {
    width: 507px;
    height: 37px;
    display: flex;
    align-items: center;
    padding-left: 12px;
    border-radius: 3px;
    background: #fff;
    box-shadow: 0 1px 2px rgba(9, 30, 66, .2);
    font-size: 13px;
    color: #a5adba;
}

.side {
    width: 168px;
    flex: none;
}

.side h4 {
    height: 16px;
    margin: 0;
    font-size: 11.500px;
    line-height: 16px;
    font-weight: 400;
    letter-spacing: .5px;
    color: #5e6c84;
}

.side .side-first {
    margin-top: 12px;
    margin-bottom: 6px;
}

.side-btn {
    height: 32px;
    margin-bottom: 7.600px;
    display: flex;
    align-items: center;
    gap: 11px;
    padding-left: 8px;
    border-radius: 3px;
    background: #ebecf0;
    font-size: 13px;
    color: #42526e;
    white-space: nowrap;
}

.side-btn.flat {
    background: none;
    color: #172b4d;
    margin-bottom: 0;
}

.side .powerups {
    margin-top: 25px;
    margin-bottom: 6px;
}

.upsell {
    margin: 7px 0 0;
    font-size: 11.300px;
    line-height: 16px;
    color: #a5adba;
}

.upgrade {
    width: 164px;
    height: 23px;
    margin-top: 4px;
    display: flex;
    align-items: center;
    gap: 5px;
    padding-left: 6px;
    border-radius: 3px;
    background: #efdbf6;
    font-size: 11px;
    color: #5e3b70;
    white-space: nowrap;
}

.upgrade svg {
    color: #8c5ea8;
}

.auto-head {
    height: 21px;
    margin-top: 24px;
    display: flex;
    align-items: center;
    justify-content: space-between;
}

.info-btn {
    width: 20px;
    height: 21px;
    display: flex;
    align-items: center;
    justify-content: center;
    border-radius: 3px;
    background: #ebecf0;
    color: #42526e;
}

.auto-add {
    margin-top: 7px;
}

.side .acoes {
    margin-top: 25px;
    margin-bottom: 5.500px;
}

.side-btn.last {
    margin-bottom: 7px;
}

.side-sep {
    height: 2px;
    margin: 0 0 7px;
    border: none;
    background: #e4e6ea;
}
```
